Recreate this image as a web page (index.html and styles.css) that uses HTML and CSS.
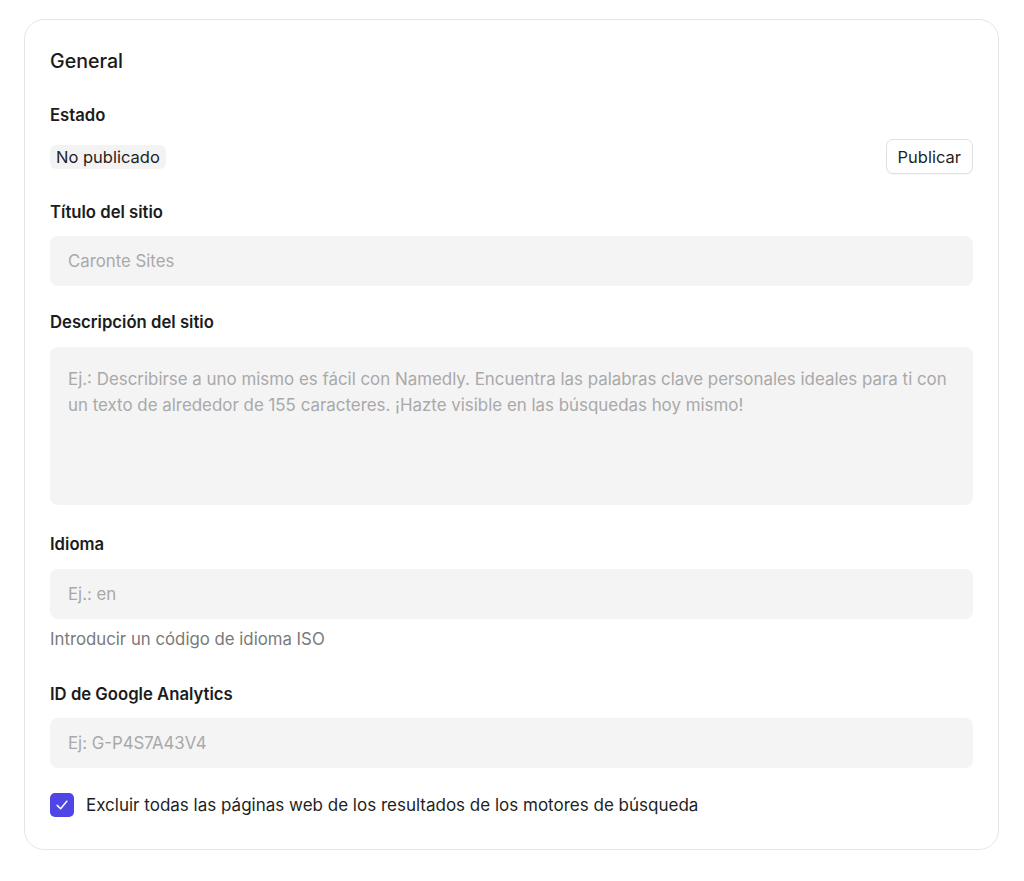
FILE: index.html
```html
<!DOCTYPE html>
<html lang="es">
<head>
<meta charset="utf-8">
<title>General</title>
<link rel="stylesheet" href="styles.css">
</head>
<body>
<section class="card">
  <h2 class="title">General</h2>

  <div class="label mt-estado">Estado</div>
  <div class="status-row">
    <span class="badge">No publicado</span>
    <button class="btn" type="button">Publicar</button>
  </div>

  <label class="label mt-titulo" for="t">Título del sitio</label>
  <input id="t" class="field mt-12" type="text" placeholder="Caronte Sites">

  <label class="label mt-desc" for="d">Descripción del sitio</label>
  <textarea id="d" class="area" placeholder="Ej.: Describirse a uno mismo es fácil con Namedly. Encuentra las palabras clave personales ideales para ti con un texto de alrededor de 155 caracteres. ¡Hazte visible en las búsquedas hoy mismo!"></textarea>

  <label class="label mt-idioma" for="i">Idioma</label>
  <input id="i" class="field mt-13" type="text" placeholder="Ej.: en">
  <p class="help">Introducir un código de idioma ISO</p>

  <label class="label mt-ga" for="g">ID de Google Analytics</label>
  <input id="g" class="field mt-12" type="text" placeholder="Ej: G-P4S7A43V4">

  <label class="check-row">
    <span class="check">
      <svg width="14" height="14" viewBox="0 0 14 14" fill="none"><path d="M2.2 7.4 L5.6 10.8 L11.8 3.2" stroke="#fff" stroke-width="1.5" stroke-linecap="round" stroke-linejoin="round"/></svg>
    </span>
    <span class="check-text">Excluir todas las páginas web de los resultados de los motores de búsqueda</span>
  </label>
</section>
</body>
</html>
```

FILE: styles.css
```css
* { box-sizing: border-box; }
html, body { margin: 0; padding: 0; background: #ffffff; }
body {
  font-family: Inter, "Noto Sans", "Liberation Sans", sans-serif;
  color: #1f1f1f;
  font-size: 16px;
  line-height: 24px;
  padding-top: 19px;
}
.card {
  margin-left: 24px;
  width: 975px;
  height: 831px;
  border: 1px solid #e6e6e6;
  border-radius: 20px;
  padding: 27px 25px 32px 25px;
  display: flex;
  flex-direction: column;
}
.title {
  margin: 0;
  font-size: 19.6px;
  line-height: 28px;
  font-weight: 500;
  color: #1a1a1a;
}
.label {
  display: block;
  font-size: 16.7px;
  line-height: 24px;
  font-weight: 600;
  color: #1c1c1c;
}
.mt-estado { margin-top: 28px; }
.mt-titulo { margin-top: 26px; }
.mt-desc { margin-top: 24px; }
.mt-idioma { margin-top: 27px; }
.mt-ga { margin-top: 31px; }
.mt-12 { margin-top: 12px; }
.mt-13 { margin-top: 13px; }

.status-row {
  margin-top: 12px;
  height: 35px;
  display: flex;
  align-items: center;
  justify-content: space-between;
}
.badge {
  background: #f3f3f3;
  border-radius: 6px;
  padding: 0 6px;
  height: 24px;
  line-height: 24px;
  font-size: 16.5px;
  color: #1f1f1f;
}
.btn {
  height: 35px;
  padding: 0 11px;
  border: 1px solid #e0e0e0;
  border-radius: 7px;
  background: #fff;
  font-family: inherit;
  font-size: 16.5px;
  color: #1f1f1f;
  box-shadow: 0 1px 1px rgba(0,0,0,0.03);
}
.field, .area {
  display: block;
  width: 100%;
  border: none;
  outline: none;
  background: #f4f4f4;
  border-radius: 8px;
  font-family: inherit;
  font-size: 16.8px;
  color: #1f1f1f;
}
.field {
  height: 50px;
  padding: 0 18px;
}
.area {
  margin-top: 13px;
  height: 158px;
  padding: 19px 18px;
  font-size: 16.9px;
  line-height: 26px;
  resize: none;
}
.field::placeholder, .area::placeholder { color: #a9a9a9; opacity: 1; }
.help {
  margin: 8px 0 0 0;
  color: #7a7a7a;
  font-size: 16.8px;
  line-height: 24px;
}
.check-row {
  margin-top: 25px;
  display: flex;
  align-items: center;
  gap: 12px;
  height: 24px;
}
.check {
  flex: none;
  width: 24px;
  height: 24px;
  border-radius: 5px;
  background: #4f46e5;
  display: flex;
  align-items: center;
  justify-content: center;
}
.check-text { color: #1f1f1f; font-size: 17px; }
```
